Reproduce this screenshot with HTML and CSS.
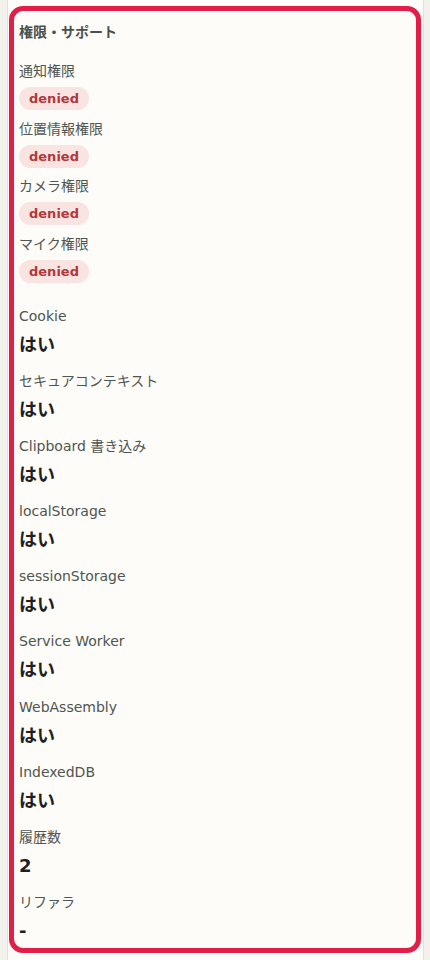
FILE: index.html
```html
<!DOCTYPE html>
<html lang="ja">
<head>
    <meta charset="UTF-8" />
    <meta name="viewport" content="width=device-width, initial-scale=1.0" />
    <title>権限・サポート</title>
    <link rel="stylesheet" href="styles.css">
</head>
<body>
    <div id="column">
        <div id="panel">
            <h2 class="panel-title">権限・サポート</h2>

            <div class="perm-list">
                <div class="perm-item">
                    <div class="item-label">通知権限</div>
                    <span class="badge">denied</span>
                </div>
                <div class="perm-item">
                    <div class="item-label">位置情報権限</div>
                    <span class="badge">denied</span>
                </div>
                <div class="perm-item">
                    <div class="item-label">カメラ権限</div>
                    <span class="badge">denied</span>
                </div>
                <div class="perm-item">
                    <div class="item-label">マイク権限</div>
                    <span class="badge">denied</span>
                </div>
            </div>

            <div class="support-list">
                <div class="support-item">
                    <div class="item-label">Cookie</div>
                    <div class="item-value">はい</div>
                </div>
                <div class="support-item">
                    <div class="item-label">セキュアコンテキスト</div>
                    <div class="item-value">はい</div>
                </div>
                <div class="support-item">
                    <div class="item-label">Clipboard 書き込み</div>
                    <div class="item-value">はい</div>
                </div>
                <div class="support-item">
                    <div class="item-label">localStorage</div>
                    <div class="item-value">はい</div>
                </div>
                <div class="support-item">
                    <div class="item-label">sessionStorage</div>
                    <div class="item-value">はい</div>
                </div>
                <div class="support-item">
                    <div class="item-label">Service Worker</div>
                    <div class="item-value">はい</div>
                </div>
                <div class="support-item">
                    <div class="item-label">WebAssembly</div>
                    <div class="item-value">はい</div>
                </div>
                <div class="support-item">
                    <div class="item-label">IndexedDB</div>
                    <div class="item-value">はい</div>
                </div>
                <div class="support-item">
                    <div class="item-label">履歴数</div>
                    <div class="item-value">2</div>
                </div>
                <div class="support-item">
                    <div class="item-label">リファラ</div>
                    <div class="item-value">-</div>
                </div>
            </div>
        </div>
    </div>
</body>
</html>
```

FILE: styles.css
```css
html, body {
    margin: 0;
    padding: 0;
}

body {
    background: #f2f1ec;
    font-family: "DejaVu Sans", "Noto Sans CJK JP", sans-serif;
    color: #222;
}

#column {
    box-sizing: border-box;
    width: 417px;
    min-height: 960px;
    margin-left: 7px;
    padding: 6px 1px 0 1px;
    background: #fdfcf8;
    border-left: 1px solid #e3e1db;
    border-right: 1px solid #e3e1db;
}

#panel {
    box-sizing: border-box;
    width: 412px;
    border: 5px solid #e11d48;
    border-radius: 14px;
    padding: 11px 5px 5px 5px;
}

.panel-title {
    margin: 0 0 19px 0;
    font-size: 14px;
    line-height: 20px;
    font-weight: bold;
    color: #4a4f4c;
}

.perm-list {
    display: flex;
    flex-direction: column;
    gap: 8.5px;
    margin-bottom: 23.5px;
}

.perm-item {
    display: flex;
    flex-direction: column;
    align-items: flex-start;
    gap: 6px;
}

.item-label {
    font-size: 14px;
    line-height: 20px;
    color: #4f5551;
}

.badge {
    display: inline-block;
    height: 23px;
    line-height: 23px;
    padding: 0 10px;
    border-radius: 12px;
    background: #f9e4e2;
    color: #b2383b;
    font-size: 13px;
    font-weight: bold;
}

.support-list {
    display: flex;
    flex-direction: column;
    gap: 14.1px;
}

.support-item {
    display: flex;
    flex-direction: column;
    gap: 7px;
}

.item-value {
    font-size: 18px;
    line-height: 24px;
    font-weight: bold;
    color: #1e1f1e;
}
```
